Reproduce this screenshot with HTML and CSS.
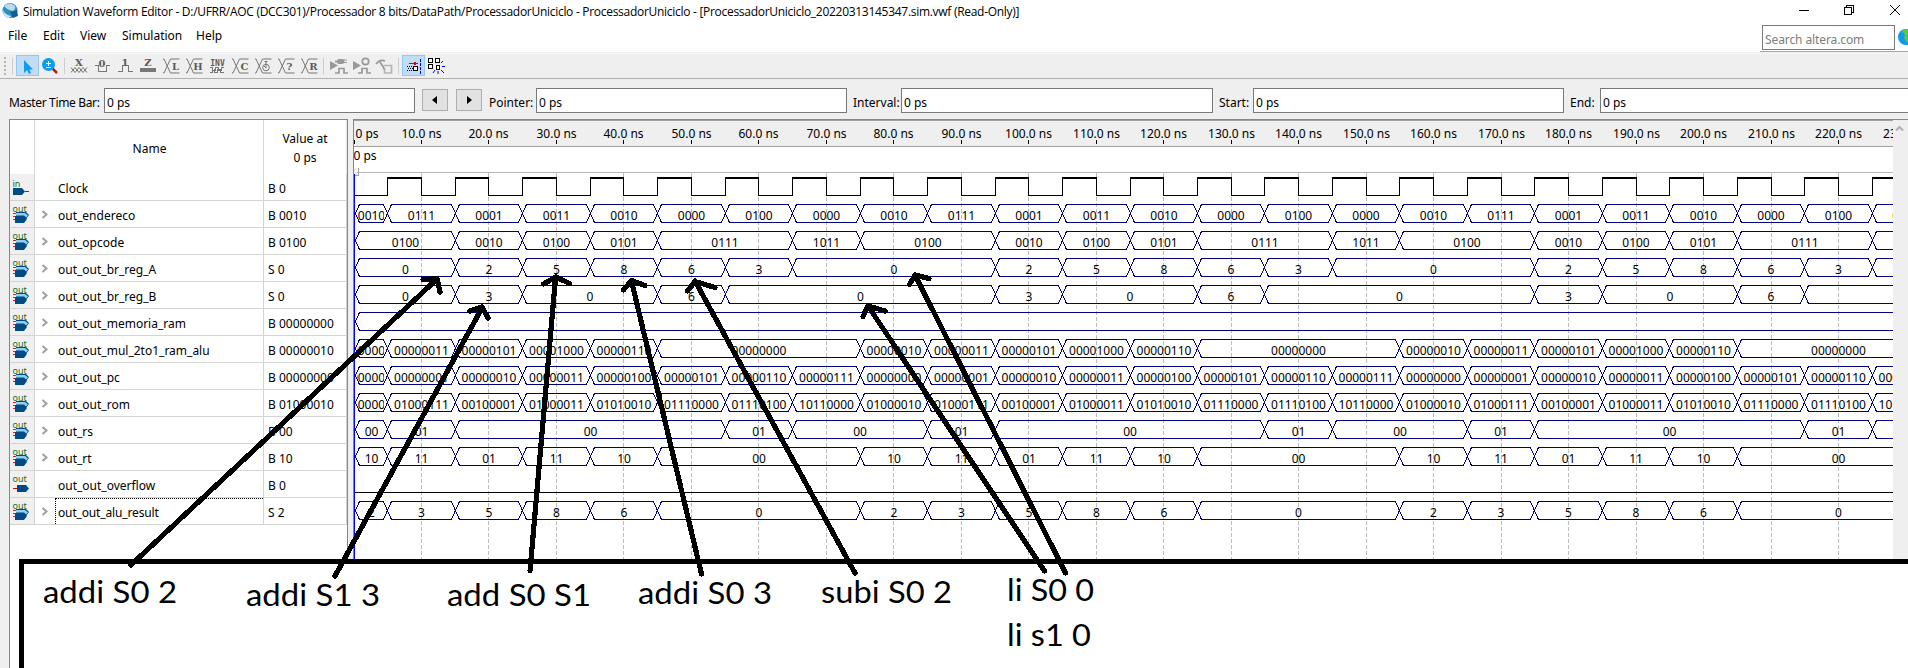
FILE: index.html
```html
<!DOCTYPE html>
<html lang="en">
<head>
<meta charset="utf-8">
<title>Simulation Waveform Editor</title>
<link rel="stylesheet" href="styles.css">
</head>
<body>
<header class="titlebar">
  <svg class="logo" width="18" height="18" viewBox="0 0 18 18"><circle cx="8" cy="8.500" r="7.500" fill="#2a8fc4"/><path d="M2 4Q8-1 13 4Q14 7 11 9Q5 8 2 4Z" fill="#b8dcee"/><path d="M1 8Q3 13 9 14L7 16Q1 14 1 8Z" fill="#d5e9f3"/><path d="M8 10L15 8L16 14L11 16Z" fill="#12608f"/></svg>
  <span class="title">Simulation Waveform Editor - D:/UFRR/AOC (DCC301)/Processador 8 bits/DataPath/ProcessadorUniciclo - ProcessadorUniciclo - [ProcessadorUniciclo_20220313145347.sim.vwf (Read-Only)]</span>
  <svg class="winbtns" width="104" height="20" viewBox="0 0 104 20" fill="none" stroke="#000" shape-rendering="crispEdges"><path d="M0 10.500H10M45.500 7.500h7v7h-7zM47.500 7V5.500h7v7H53"/><path d="M91 5L101 15M101 5L91 15" shape-rendering="auto"/></svg>
</header>
<nav class="menubar">
  <span class="m-file">File</span><span class="m-edit">Edit</span><span class="m-view">View</span><span class="m-sim">Simulation</span><span class="m-help">Help</span>
  <div class="search"><div class="searchbox">Search altera.com</div><svg width="16" height="18" viewBox="0 0 16 18"><circle cx="8" cy="9" r="8" fill="#0a9cf0"/><path d="M4 3Q8 0 13 3L12 6L9 7L11 10L9 15L6 10L7 7Z" fill="#5cc83c"/></svg></div>
</nav>
<div class="toolbar">
<svg width="460" height="24" viewBox="0 54 460 24">
  <g shape-rendering="crispEdges">
  <path d="M5 57V76" stroke="#b4b4b4" stroke-width="2" stroke-dasharray="2 2"/>
  <path d="M12.500 58V74M64.500 58V74M323.500 58V74M398.500 58V74" stroke="#cdcdcd"/>
  <path d="M16.500 55.500h22v20h-22zM402.500 55.500h22v20h-22z" fill="#c2dcf3" stroke="#90c8f6"/>
  </g>
  <path d="M24 60V73L27 70L29 74L31 73L29.500 69.500H33Z" fill="#0c9cf2"/>
  <path d="M52 68L57 73" stroke="#c01818" stroke-width="2.500"/><circle cx="48.500" cy="64.500" r="6.500" fill="#0c9cf2"/><path d="M46 63.500h5M48.500 61v5M46 67.500h5" stroke="#fff" shape-rendering="crispEdges"/>
  <g fill="none" stroke="#777" stroke-width="1">
  <path d="M71 67.500l4 5l4-5l4 5l4-5M71 72.500l4-5l4 5l4-5l4 5"/>
  <path d="M95 65.500h3.500v6h8v-6h3M118 71.500h4.500v-6h6v6h4" shape-rendering="crispEdges"/>
  <path d="M140 68h16v4h-16z" fill="#777" stroke="none"/>
  <path d="M163 59h1l6.500 14M163 73h1l6.500-14h9M170.500 73h9M186 59h1l6.500 14M186 73h1l6.500-14h9M193.500 73h9M232 59h1l6.500 14M232 73h1l6.500-14h9M239.500 73h9M255 59h1l6.500 14M255 73h1l6.500-14h9M262.500 73h9M278 59h1l6.500 14M278 73h1l6.500-14h9M285.500 73h9M301 59h1l6.500 14M301 73h1l6.500-14h9M308.500 73h9"/>
  <path d="M210 67.500h2v3h3v-3h3v3h3v-3h3M210 72.500h2v-3M214 69v3.500h3v-3h3v3h4" shape-rendering="crispEdges"/>
  <circle cx="266" cy="67.500" r="3.300"/><path d="M266 62v6l-2-2M264.500 61.500h3"/>
  </g>
  <g class="toolglyph"><text x="79" y="66">X</text><text x="102" y="67">0</text><text x="125" y="66">1</text><text x="148" y="66">Z</text><text x="175.500" y="70">L</text><text x="198" y="70">H</text><text x="217.500" y="65.500" class="small">INV</text><text x="244.500" y="70">C</text><text x="289.500" y="70">?</text><text x="313.500" y="70">R</text></g>
  <g fill="#999" stroke="none"><path d="M330 61l8 4.500l-8 4.500zM353 61l8 4.500l-8 4.500z"/><path d="M338 59h5q3 2.500 0 5h-5q-2-2.500 0-5zM335 60.500h3v2h-3zM343 59.500h4v1h-4zM343 62h4v1h-4z"/></g>
  <g fill="none" stroke="#999" stroke-width="1.700"><path d="M335 73h4v-4.500h5V73h4M358 73h4v-4.500h5V73h4"/><circle cx="365.500" cy="61.500" r="3.200"/><path d="M376 64q4-5 9-3M380 62l5 8"/><path d="M383.500 65.500h8v7.500h-7v-4" stroke="#b4b4b4"/></g>
  <g shape-rendering="crispEdges"><path d="M409 63.500h6" stroke="#e00000"/><path d="M414 61.500l4 2l-4 2z" fill="#e00000"/><path d="M407 66.500h6M407 70.500h6M408 68.500h5" stroke="#000" stroke-dasharray="1 1"/><path d="M413.500 66.500h4v4h-4z" fill="#fff" stroke="#000"/><path d="M420.500 59V74" stroke="#00f" stroke-dasharray="3 1"/>
  <path d="M428.500 58.500h4v4h-4zM435.500 58.500h4v4h-4zM428.500 64.500h4v4h-4zM436.500 65.500h3v4h-3z" fill="#fff" stroke="#000"/></g>
  <path d="M441 63l2-2M442 66.500h3M441 70l3 3M438 71v3M435 70l-2 3" stroke="#00f"/>
</svg>
</div>
<div class="timebar">
  <label class="l-master">Master Time Bar:</label><div class="field">0 ps</div>
  <div class="step s1"><svg width="6" height="8"><path d="M5 0V8L0 4Z"/></svg></div><div class="step s2"><svg width="6" height="8"><path d="M1 0V8L6 4Z"/></svg></div>
  <label class="l-pointer">Pointer:</label><div class="field">0 ps</div>
  <label class="l-interval">Interval:</label><div class="field wide">0 ps</div>
  <label class="l-start">Start:</label><div class="field">0 ps</div>
  <label class="l-end">End:</label><div class="field">0 ps</div>
</div>
<main class="workspace">
  <section class="signals">
    <div class="sighead"><div></div><div>Name</div><div class="valhead">Value at<br>0 ps</div></div>
    <div id="rows"></div>
  </section>
  <section class="wavepane"><svg id="wave" width="1539" height="548" viewBox="354 120 1539 548"></svg></section>
  <aside class="scroll"><svg width="10" height="8" viewBox="0 0 10 8"><path d="M1 5.500L4.500 2L8 5.500" fill="none" stroke="#b0b0b0" stroke-width="2"/></svg></aside>
</main>
<svg class="notes" width="1908" height="668" viewBox="0 0 1908 668">
  <path d="M24 564H1908V668H24Z" fill="#fff"/>
  <path d="M1908 561.500H21.500V672" fill="none" stroke="#000" stroke-width="5"/>
  <g class="arrows">
    <path d="M131 565L437 279M423 279.500L437 278.500L440 292"/>
    <path d="M335 576L482 308M470 311L482 307L488 318"/>
    <path d="M530 571L555.500 278M543.500 284L556 277L569.500 283.500"/>
    <path d="M701.500 574L631.500 281M623.500 290L631.500 280.500L645 285.500"/>
    <path d="M855 573L695 281M687.500 291L695 281.500L715 287.500"/>
    <path d="M1044.500 571L868 306M863 316.500L868 306L885 311"/>
    <path d="M1065.500 573L915 275M909.500 284.500L915 275L929 278.500"/>
  </g>
  <g class="notetext">
    <text x="43" y="603" textLength="134" lengthAdjust="spacingAndGlyphs">addi S0 2</text>
    <text x="246" y="606" textLength="134" lengthAdjust="spacingAndGlyphs">addi S1 3</text>
    <text x="447" y="605.500" textLength="144" lengthAdjust="spacingAndGlyphs">add S0 S1</text>
    <text x="638" y="603.500" textLength="134" lengthAdjust="spacingAndGlyphs">addi S0 3</text>
    <text x="821" y="602.500" textLength="131" lengthAdjust="spacingAndGlyphs">subi S0 2</text>
    <text x="1007" y="600.500" textLength="87" lengthAdjust="spacingAndGlyphs">li S0 0</text>
    <text x="1007" y="645.500" textLength="84" lengthAdjust="spacingAndGlyphs">li s1 0</text>
  </g>
</svg>
<script src="wave.js"></script>
</body>
</html>
```

FILE: styles.css
```css
* { box-sizing: border-box; }
body { margin: 0; width: 1908px; height: 668px; overflow: hidden; position: relative; display: flex; flex-direction: column; background: #efefef; color: #000; font: 12px "Noto Sans", sans-serif; }
.titlebar { height: 24px; background: #fff; display: flex; }
.logo { margin: 2px 3px 0 2px; }
.title { font-family: "Open Sans", "Noto Sans", sans-serif; line-height: 24px; white-space: nowrap; letter-spacing: -0.287px; }
.winbtns { margin-left: auto; margin-right: 5px; }
.menubar { height: 30px; background: #fff; border-bottom: 1px solid #f6f6f6; display: flex; line-height: 23px; padding-left: 8px; box-shadow: inset 0 -1px #efefef; }
.m-file { width: 35px; }
.m-edit { width: 37px; }
.m-view { width: 42px; }
.m-sim { width: 74px; }
.search { margin-left: auto; width: 148px; height: 28px; border-bottom: 1px solid #a8a8a8; padding: 1px 0 0 2px; display: flex; gap: 3px; overflow: hidden; }
.search svg { flex: none; margin-top: 3px; }
.searchbox { width: 133px; height: 25px; flex: none; border: 1px solid #7a7a7a; color: #7d7d7d; padding: 2px 2px 0; letter-spacing: -0.1px; }
.toolbar { height: 25px; border-bottom: 1px solid #b2b2b2; }
.toolbar svg { display: block; }
.toolglyph text { font: bold 10px "DejaVu Serif", serif; fill: #5c5c5c; text-anchor: middle; }
.toolglyph .small { font: bold 8px "DejaVu Sans Mono", monospace; }
.timebar { height: 40px; display: flex; padding: 9px 0 0 9px; overflow: hidden; }
.timebar label { flex: none; line-height: 29px; white-space: nowrap; }
.field { flex: none; width: 311px; height: 25px; border: 1px solid #7a7a7a; background: #fff; padding-left: 2px; line-height: 27px; }
.field.wide { width: 312px; }
.l-master { width: 95px; letter-spacing: -0.35px; }
.l-pointer { width: 47px; margin-left: 7px; }
.l-interval { width: 48px; margin-left: 6px; }
.l-start { width: 34px; margin-left: 6px; }
.l-end { width: 30px; margin-left: 6px; }
.step { flex: none; width: 26px; height: 22px; margin: 1px 0 0 7px; border: 1px solid #adadad; background: #e2e2e2; display: flex; align-items: center; justify-content: center; }
.step.s2 { margin-left: 8px; }
.workspace { height: 549px; display: flex; padding-left: 9px; }
.signals { width: 339px; height: 549px; background: #fff; border: 1px solid #828790; border-bottom: 0; }
.sighead { height: 54px; display: grid; grid-template-columns: 25px 229px 83px; }
.sighead div { border-right: 1px solid #d8d8d8; display: flex; align-items: center; justify-content: center; text-align: center; }
.sighead .valhead { line-height: 19px; padding-top: 1px; border-right-color: #e8e8e8; }
.sighead div:nth-child(2) { padding: 3px 0 0 1px; }
.row { height: 27px; display: grid; grid-template-columns: 25px 229px 83px; border-bottom: 1px solid #d4d4d4; }
.row > div { border-right: 1px solid #d4d4d4; line-height: 29px; height: 26px; white-space: nowrap; }
.row .ico { background: #f0f0f0; }
.ico svg { display: block; }
.row .name { display: flex; }
.row .name svg { width: 10px; height: 12px; margin: 8px 8px 0 5px; flex: none; }
.row .name span { flex: 1; height: 26px; }
.row .name span.focus { border: 1px dotted #000; border-width: 1px 0 0 1px; margin-left: -3px; padding-left: 2px; line-height: 27px; letter-spacing: -0.15px; }
.row .val { padding-left: 4px; }
.wavepane { width: 1540px; margin-left: 5px; height: 549px; border-top: 1px solid #828790; border-left: 1px solid #828790; background: #fff; overflow: hidden; }
.wavepane svg { display: block; }
#wave text { font: 12px "Noto Sans", sans-serif; }
#wave .mid { text-anchor: middle; }
.scroll { flex: 1; border-top: 1px solid #828790; padding: 5px 2px; line-height: 0; background: #efefef; }
.notes { position: absolute; left: 0; top: 0; }
.arrows path { fill: none; stroke: #000; stroke-width: 5.2px; stroke-linecap: round; stroke-linejoin: round; shape-rendering: crispEdges; }
.notetext text { font: 31px Lato, sans-serif; }
```

FILE: wave.js
```js
const signals = [
  ['Clock', 'B 0'], ['out_endereco', 'B 0010'], ['out_opcode', 'B 0100'], ['out_out_br_reg_A', 'S 0'],
  ['out_out_br_reg_B', 'S 0'], ['out_out_memoria_ram', 'B 00000000'], ['out_out_mul_2to1_ram_alu', 'B 00000010'],
  ['out_out_pc', 'B 00000000'], ['out_out_rom', 'B 01000010'], ['out_rs', 'B 00'], ['out_rt', 'B 10'],
  ['out_out_overflow', 'B 0'], ['out_out_alu_result', 'S 2']
];
// One value per 10 ns slot; the program loops every eight slots.
const buses = {
  1: '0010 0111 0001 0011 0010 0000 0100 0000',
  2: '0100 0100 0010 0100 0101 0111 0111 1011',
  3: '0 0 2 5 8 6 3 0',
  4: '0 0 3 0 0 6 0 0',
  6: '00000010 00000011 00000101 00001000 00000110 00000000 00000000 00000000',
  7: '00000000 00000001 00000010 00000011 00000100 00000101 00000110 00000111',
  8: '01000010 01000111 00100001 01000011 01010010 01110000 01110100 10110000',
  9: '00 01 00 00 00 00 01 00',
  10: '10 11 01 11 10 00 00 00',
  12: '2 3 5 8 6 0 0 0'
};

function pinIcon(i) {
  const label = `<text x="2.500" y="${i ? 10.5 : 12.5}" font-family="Noto Sans" font-size="9" fill="#1d6b1d">${i ? 'out' : 'in'}</text>`;
  if (i === 0) return label + '<path d="M3 14h9l3 3.500l-3 3.500H3z" fill="#004a86"/><path d="M15 17.500h4" stroke="#d00"/>';
  if (i === 11) return label + '<path d="M7 14h9l3 3.500l-3 3.500H7z" fill="#004a86"/><path d="M3 17.500h4" stroke="#d00"/>';
  return label + '<path d="M3 12.500h3M3 15.500h3M3 18.500h3" stroke="#e02020"/><path d="M6 11h10l3 3l-3 4H6z" fill="#004a86"/><path d="M6 12h9l3 2.500l-2 2l-2-2H6z" fill="#8fd0f5"/><path d="M5 15h9l3 3l-3 4H5z" fill="#004a86"/>';
}

document.getElementById('rows').innerHTML = signals.map(([name, value], i) => {
  const chevron = i === 0 || i === 11 ? '' : '<path d="M2.500 2L6.500 5.500L2.500 9" fill="none" stroke="#a0a0a0" stroke-width="2"/>';
  return `<div class="row"><div class="ico"><svg width="22" height="24">${pinIcon(i)}</svg></div>` +
    `<div class="name"><svg>${chevron}</svg><span class="${i === 12 ? 'focus' : ''}">${name}</span></div><div class="val">${value}</div></div>`;
}).join('');

const X = t => Math.floor(354 + t * 67.48);
let out = '<defs><clipPath id="first"><rect x="357" y="170" width="27" height="400"/></clipPath></defs>';
out += '<path d="M353 120h1540v26H353z" fill="#efefef"/>';
out += '<g shape-rendering="crispEdges"><path d="M353 120.500H1893M353 146.500H1893" stroke="#a0a0a4"/><path d="M357 172.500H1893" stroke="#b8b8b8"/><path d="M353 168h4v7h-4z" fill="#efefef"/><path d="M358.500 168v7h-5" fill="none" stroke="#a0a0a4"/></g>';
for (let k = 0; k <= 23; k++) {
  out += `<path d="M${X(k) + .5} 140v4" stroke="#000" shape-rendering="crispEdges"/>`;
  if (k) out += `<path d="M${X(k) + .5} 173V560" stroke="#bcbcbc" stroke-dasharray="4 2" shape-rendering="crispEdges"/><text class="mid" x="${X(k) + .5}" y="138">${k * 10}.0 ns</text>`;
}
out += '<text x="355.500" y="138">0 ps</text><text x="353.500" y="160">0 ps</text>';

let clock = 'M354 195.500';
let tops = '';
for (let k = 0; k <= 23; k++) {
  clock += `H${X(k + .5) + .5}V177.500H${X(k + 1) + .5}V195.500`;
  tops += `M${X(k + .5)} 178H${X(k + 1) + 1}`;
}
out += `<g shape-rendering="crispEdges" fill="none" stroke="#000"><path d="${clock}M354 492.500H1893"/><path d="${tops}" stroke-width="2"/></g>`;

let lines = '';
let texts = '';
function lane(i, values) {
  const top = 177.500 + 27 * i, bottom = top + 18, mid = top + 9;
  let start = 0;
  for (let s = 0; s <= 31; s++) {
    if (values && values[s % 8] === values[(s + 1) % 8]) continue;
    if (!values && s < 31) continue;
    const a = start ? X(start - .5) + .5 : 355.500, b = X(s + .5) + .5;
    lines += `M${a} ${mid}L${a + 4} ${top}H${b - 4}L${b} ${mid}L${b - 4} ${bottom}H${a + 4}Z`;
    if (values && (a + b) / 2 < 1930) {
      const clip = start === 0 && s === 0 ? ' clip-path="url(#first)"' : '';
      texts += `<text class="mid" x="${(a + b) / 2}" y="${top + 15}"${clip}>${values[s % 8]}</text>`;
    }
    start = s + 1;
  }
}
for (const i in buses) lane(+i, buses[i].split(' '));
lane(5, null);
out += `<path d="${lines}" fill="none" stroke="#000080" shape-rendering="crispEdges"/>${texts}`;
out += '<path d="M354.500 174V560" stroke="#0000ff" shape-rendering="crispEdges"/>';
document.getElementById('wave').innerHTML = out;
```
